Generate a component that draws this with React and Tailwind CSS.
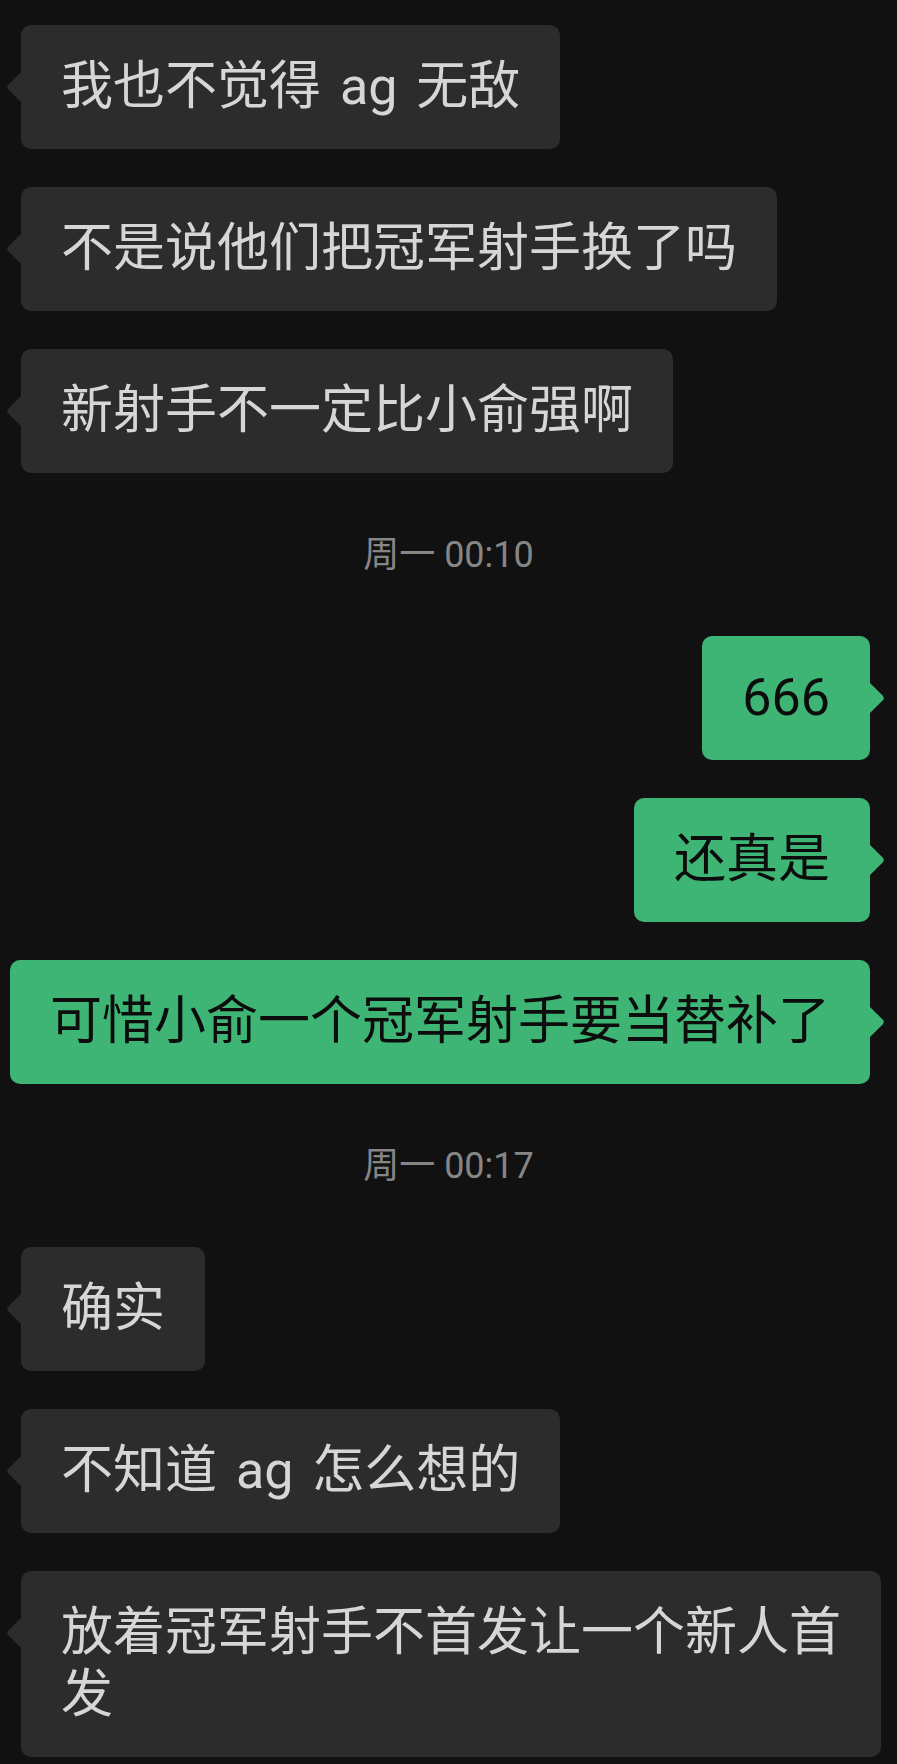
import React from 'react';

// chat log, top to bottom
const MESSAGES = [
  { type: 'in', text: '我也不觉得 ag 无敌' },
  { type: 'in', text: '不是说他们把冠军射手换了吗' },
  { type: 'in', text: '新射手不一定比小俞强啊' },
  { type: 'time', text: '周一 00:10' },
  { type: 'out', text: '666' },
  { type: 'out', text: '还真是' },
  { type: 'out', text: '可惜小俞一个冠军射手要当替补了' },
  { type: 'time', text: '周一 00:17' },
  { type: 'in', text: '确实' },
  { type: 'in', text: '不知道 ag 怎么想的' },
  { type: 'in', text: '放着冠军射手不首发让一个新人首发' },
];

const FONT = "font-['Roboto','Noto_Sans_CJK_SC',sans-serif]";

const TailLeft = () => (
  <svg width="17" height="32" viewBox="0 0 17 32" className="absolute -left-[16px] top-[46px] fill-[#2c2c2c]">
    <path d="M17 0 L3.4 13.4 Q1 16 3.4 18.6 L17 32 Z" />
  </svg>
);

const TailRight = () => (
  <svg width="17" height="32" viewBox="0 0 17 32" className="absolute -right-[16px] top-[46px] fill-[#3eb575]">
    <path d="M0 0 L13.6 13.4 Q16 16 13.6 18.6 L0 32 Z" />
  </svg>
);

const Incoming = ({ text }) => (
  <div className="flex justify-start pl-[21px]">
    <div className="relative max-w-[860px] rounded-[10px] bg-[#2c2c2c] px-[40px] py-[31px] text-[52px] leading-[62px] text-[#d6d6d6] [word-spacing:6px]">
      <TailLeft />
      {text}
    </div>
  </div>
);

const Outgoing = ({ text }) => (
  <div className="flex justify-end pr-[27px]">
    <div className="relative max-w-[860px] rounded-[10px] bg-[#3eb575] px-[40px] py-[31px] text-[52px] leading-[62px] text-[#0c0c0c] [word-spacing:6px]">
      <TailRight />
      {text}
    </div>
  </div>
);

const TimeStamp = ({ text }) => (
  <div className="flex h-[87px] items-center justify-center text-[36px] text-[#868686]">
    {text}
  </div>
);

export default function App() {
  return (
    <div className={`min-h-[1764px] w-full overflow-hidden bg-[#111111] pt-[25px] ${FONT}`}>
      <div className="flex flex-col gap-[38px]">
        {MESSAGES.map((m, i) => {
          if (m.type === 'time') return <TimeStamp key={i} text={m.text} />;
          if (m.type === 'out') return <Outgoing key={i} text={m.text} />;
          return <Incoming key={i} text={m.text} />;
        })}
      </div>
    </div>
  );
}
